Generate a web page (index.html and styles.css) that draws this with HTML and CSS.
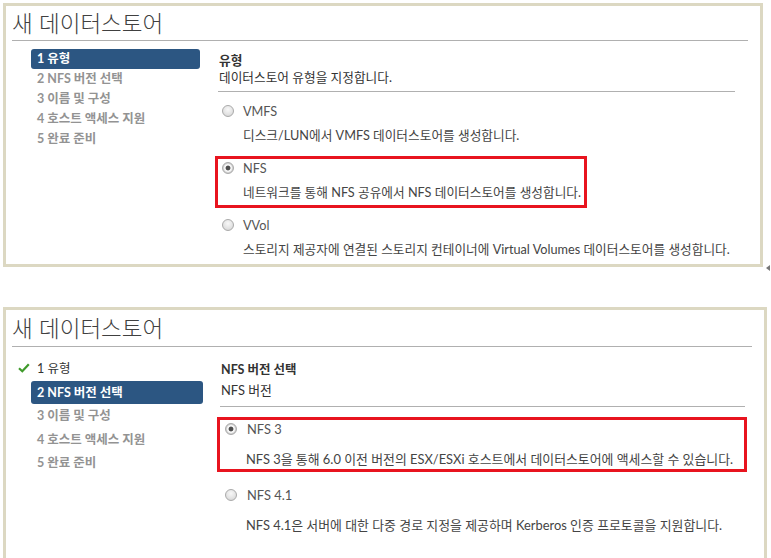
FILE: index.html
```html
<!DOCTYPE html>
<html lang="ko">
<head>
<meta charset="utf-8">
<title>새 데이터스토어</title>
<link rel="stylesheet" href="styles.css">
</head>
<body>
<div class="wizard w1">
  <div class="title">새 데이터스토어</div>
  <div class="body">
    <ul class="steps">
      <li class="step active">1 유형</li>
      <li class="step">2 NFS 버전 선택</li>
      <li class="step">3 이름 및 구성</li>
      <li class="step">4 호스트 액세스 지원</li>
      <li class="step">5 완료 준비</li>
    </ul>
    <div class="page">
      <div class="page-head">
        <div class="h">유형</div>
        <div class="sub">데이터스토어 유형을 지정합니다.</div>
      </div>
      <div class="opt">
        <div class="opt-row"><span class="radio"></span><span class="lbl">VMFS</span></div>
        <div class="desc">디스크/LUN에서 VMFS 데이터스토어를 생성합니다.</div>
      </div>
      <div class="opt marked">
        <div class="opt-row"><span class="radio on"></span><span class="lbl">NFS</span></div>
        <div class="desc">네트워크를 통해 NFS 공유에서 NFS 데이터스토어를 생성합니다.</div>
      </div>
      <div class="opt">
        <div class="opt-row"><span class="radio"></span><span class="lbl">VVol</span></div>
        <div class="desc">스토리지 제공자에 연결된 스토리지 컨테이너에 Virtual Volumes 데이터스토어를 생성합니다.</div>
      </div>
    </div>
  </div>
</div>
<div class="tri"></div>
<div class="wizard w2">
  <div class="title">새 데이터스토어</div>
  <div class="body">
    <ul class="steps">
      <li class="step done"><svg class="check" width="12" height="10" viewBox="0 0 12 10"><path d="M1 5.2 L4.3 8.3 L10.8 1.2" fill="none" stroke="#3f9a2b" stroke-width="2.2"/></svg>1 유형</li>
      <li class="step active">2 NFS 버전 선택</li>
      <li class="step">3 이름 및 구성</li>
      <li class="step">4 호스트 액세스 지원</li>
      <li class="step">5 완료 준비</li>
    </ul>
    <div class="page">
      <div class="page-head">
        <div class="h">NFS 버전 선택</div>
        <div class="sub">NFS 버전</div>
      </div>
      <div class="opt marked">
        <div class="opt-row"><span class="radio on"></span><span class="lbl">NFS 3</span></div>
        <div class="desc">NFS 3을 통해 6.0 이전 버전의 ESX/ESXi 호스트에서 데이터스토어에 액세스할 수 있습니다.</div>
      </div>
      <div class="opt">
        <div class="opt-row"><span class="radio"></span><span class="lbl">NFS 4.1</span></div>
        <div class="desc">NFS 4.1은 서버에 대한 다중 경로 지정을 제공하며 Kerberos 인증 프로토콜을 지원합니다.</div>
      </div>
    </div>
  </div>
</div>
</body>
</html>
```
FILE: styles.css
```css
html, body {
  margin: 0;
  padding: 0;
  background: #fff;
}
body {
  font-family: "Lato", "Noto Sans CJK KR", sans-serif;
  font-size: 12.7px;
  color: #444;
  position: relative;
  width: 771px;
  height: 558px;
  overflow: hidden;
}
.wizard {
  border: 3px solid #dcd8c2;
  background: #fff;
  box-sizing: border-box;
  display: flex;
  flex-direction: column;
  overflow: hidden;
}
.w1 {
  margin: 3px 0 0 3px;
  width: 760px;
  height: 264px;
}
.w2 {
  margin: 40px 0 0 3px;
  width: 764px;
  height: 254px;
  font-size: 12.9px;
}
.title {
  flex: none;
  font-family: "Noto Sans CJK KR", sans-serif;
  font-size: 22.5px;
  font-weight: 300;
  color: #404040;
  line-height: 30px;
  padding: 0;
  margin: 0 12px 0 6px;
  border-bottom: 1px solid #b0b0b0;
  box-sizing: border-box;
  white-space: nowrap;
}
.w1 .title { height: 35px; padding-top: 1px; }
.w2 .title { height: 37px; padding-top: 2px; }

.body {
  display: flex;
  flex: 1;
  min-height: 0;
}
.steps {
  list-style: none;
  margin: 0 0 0 25px;
  padding: 8px 0 0 0;
  width: 169px;
  flex: none;
  font-size: 12.5px;
}
.w2 .steps { width: 172px; padding-top: 10px; }
.step {
  position: relative;
  height: 20px;
  line-height: 20px;
  padding-left: 6px;
  font-weight: 700;
  color: #939393;
  border-radius: 3px;
  white-space: nowrap;
}
.w2 .step { height: 23.5px; line-height: 23.5px; }
.step.active {
  background: #2c5682;
  color: #fff;
}
.step.done {
  color: #333;
  font-weight: 400;
}
.check {
  position: absolute;
  left: -13px;
  top: 6px;
}
.page {
  flex: 1;
  margin-left: 18px;
  margin-right: 25px;
  padding-top: 11px;
}
.w2 .page { margin-left: 17px; margin-right: 19px; padding-top: 12px; }
.page-head {
  border-bottom: 1px solid #b0b0b0;
  padding-left: 1px;
  padding-bottom: 5px;
  margin-bottom: 10px;
  color: #333;
}
.w2 .page-head { padding-bottom: 5px; margin-bottom: 12px; }
.page-head .h {
  font-weight: 700;
  line-height: 17px;
}
.page-head .sub { line-height: 17px; }
.w2 .page-head .h, .w2 .page-head .sub { line-height: 21px; }
.w2 .page-head .h { font-size: 12.5px; }

.opt {
  position: relative;
  padding-left: 1px;
  margin-bottom: 15px;
}
.opt-row {
  display: flex;
  align-items: center;
  height: 18px;
  line-height: 18px;
  color: #555;
}
.desc {
  line-height: 18px;
  margin-top: 6px;
  padding-left: 24px;
  color: #444;
  white-space: nowrap;
}
.w2 .opt { margin-bottom: 16px; }
.w2 .opt-row { height: 20px; line-height: 20px; }
.w2 .desc { line-height: 20px; margin-top: 10px; padding-left: 25px; }
.radio {
  width: 12px;
  height: 12px;
  box-sizing: border-box;
  border-radius: 50%;
  border: 1px solid #aaa;
  background: radial-gradient(circle at 50% 35%, #f8f8f8 0, #e2e2e2 60%, #cdcdcd 100%);
  margin-left: 3px;
  margin-right: 9px;
  flex: none;
}
.w2 .radio { margin-left: 4px; margin-right: 10px; width: 12px; height: 12px; }
.radio.on {
  background: radial-gradient(circle, #4d4d4d 0, #4d4d4d 2px, #f6f6f6 2.8px, #f6f6f6 3.5px, #cccccc 4.8px);
}
.opt.marked::after {
  content: "";
  position: absolute;
  left: -3px;
  top: -3px;
  width: 372px;
  height: 52px;
  border: 3px solid #e8141f;
  box-sizing: border-box;
}
.w2 .opt.marked::after {
  left: -3px;
  top: -2px;
  width: 530px;
  height: 55px;
}
.tri {
  position: absolute;
  left: 766px;
  top: 265px;
  width: 0;
  height: 0;
  border-top: 3px solid transparent;
  border-bottom: 3px solid transparent;
  border-right: 4px solid #777;
}
```
